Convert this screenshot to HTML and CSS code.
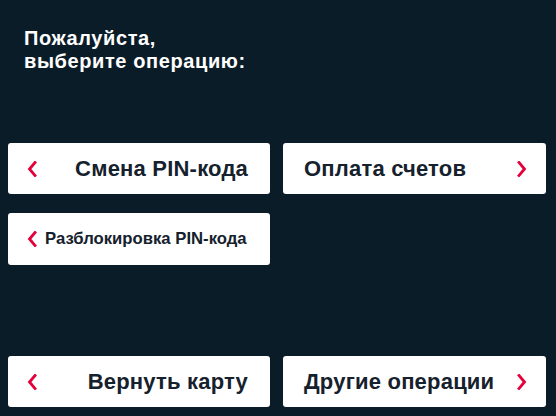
FILE: index.html
```html
<!DOCTYPE html>
<html lang="ru">
<head>
<meta charset="utf-8">
<link rel="stylesheet" href="styles.css">
</head>
<body>
<div class="screen">
  <h1 class="title">Пожалуйста,<br>выберите операцию:</h1>
  <div class="grid top">
    <button class="btn btn-left"><svg class="chev" viewBox="0 0 10 16"><path d="M8 1.5 L2.5 8 L8 14.5"/></svg><span class="label">Смена PIN-кода</span></button>
    <button class="btn btn-right"><span class="label">Оплата счетов</span><svg class="chev" viewBox="0 0 10 16"><path d="M2 1.5 L7.5 8 L2 14.5"/></svg></button>
    <button class="btn btn-left small"><svg class="chev" viewBox="0 0 10 16"><path d="M8 1.5 L2.5 8 L8 14.5"/></svg><span class="label">Разблокировка PIN-кода</span></button>
  </div>
  <div class="grid bottom">
    <button class="btn btn-left"><svg class="chev" viewBox="0 0 10 16"><path d="M8 1.5 L2.5 8 L8 14.5"/></svg><span class="label">Вернуть карту</span></button>
    <button class="btn btn-right"><span class="label">Другие операции</span><svg class="chev" viewBox="0 0 10 16"><path d="M2 1.5 L7.5 8 L2 14.5"/></svg></button>
  </div>
</div>
</body>
</html>
```
FILE: styles.css
```css
html, body {
  margin: 0;
  padding: 0;
  background: #0b1c29;
}
.screen {
  width: 556px;
  height: 416px;
  box-sizing: border-box;
  display: flex;
  flex-direction: column;
  padding: 27px 10px 9px 8px;
  font-family: "Liberation Sans", Arial, sans-serif;
}
.title {
  margin: 0 0 0 16px;
  color: #ffffff;
  font-size: 20px;
  line-height: 22.5px;
  letter-spacing: 0.6px;
  font-weight: bold;
}
.grid {
  display: grid;
  grid-template-columns: 262px 263px;
  column-gap: 13px;
  row-gap: 19px;
}
.top {
  margin-top: 71px;
}
.bottom {
  margin-top: auto;
}
.btn {
  height: 51px;
  border: none;
  border-radius: 3px;
  background: #ffffff;
  display: flex;
  align-items: center;
  font-family: "Liberation Sans", Arial, sans-serif;
  font-weight: bold;
  font-size: 22px;
  letter-spacing: 0.2px;
  color: #15212c;
  cursor: pointer;
}
.btn-left {
  justify-content: space-between;
  padding: 0 22px 0 19px;
}
.btn-right {
  justify-content: space-between;
  padding: 0 19px 0 21px;
}
.small {
  font-size: 16.7px;
  letter-spacing: 0;
  height: 52px;
  justify-content: flex-start;
  gap: 8px;
}
.chev {
  width: 10px;
  height: 16px;
  flex: none;
  fill: none;
  stroke: #e4003b;
  stroke-width: 2.8;
  stroke-linecap: square;
}
```
